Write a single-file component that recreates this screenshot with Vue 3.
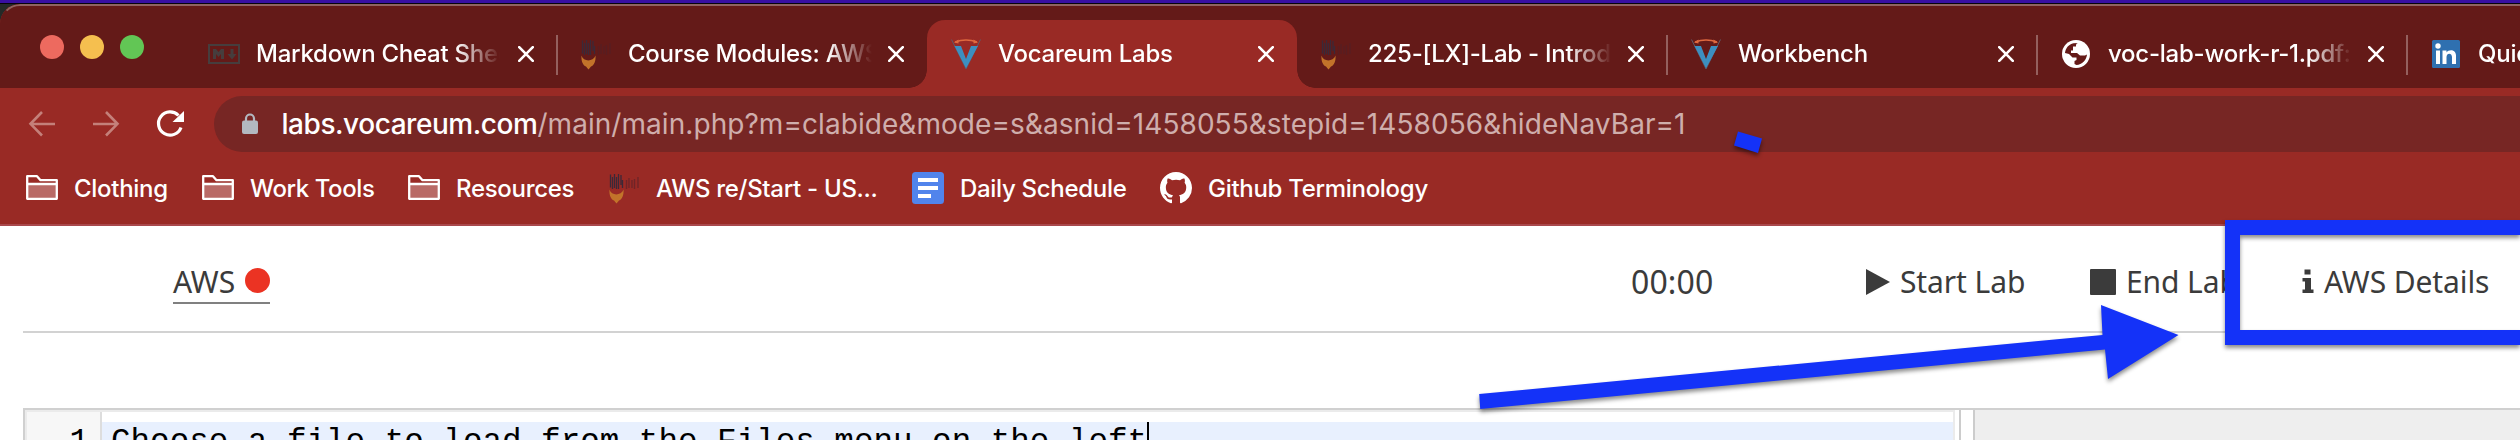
<script setup>
const tabs = [
  { title: 'Markdown Cheat Sheet', icon: 'md' },
  { title: 'Course Modules: AWS', icon: 'aws' },
  { title: 'Vocareum Labs', icon: 'voc', active: true },
  { title: '225-[LX]-Lab - Introduction', icon: 'aws' },
  { title: 'Workbench', icon: 'voc' },
  { title: 'voc-lab-work-r-1.pdf: 225', icon: 'globe' },
  { title: 'Quick', icon: 'in' },
]
const bookmarks = [
  { title: 'Clothing', icon: 'folder' },
  { title: 'Work Tools', icon: 'folder' },
  { title: 'Resources', icon: 'folder' },
  { title: 'AWS re/Start - US...', icon: 'aws' },
  { title: 'Daily Schedule', icon: 'doc' },
  { title: 'Github Terminology', icon: 'github' },
]
</script>

<template>
  <div class="screen">
    <div class="window">
      <header class="strip">
        <div class="lights"><i class="red"></i><i class="amber"></i><i class="green"></i></div>
        <div v-for="t in tabs" :key="t.title" class="tab" :class="{ active: t.active }">
          <svg v-if="t.icon === 'md'" class="ico" viewBox="0 0 32 32"><rect x="1" y="7" width="30" height="18" fill="none" stroke="#463d3d" stroke-width="2" /><path d="M5 21V11h3l2.500 3 2.500-3h3v10h-3v-5l-2.500 3-2.500-3v5zM22.500 11h3v5h3l-4.500 5.500-4.500-5.500h3z" fill="#463d3d" /></svg>
          <svg v-else-if="t.icon === 'aws'" class="ico" viewBox="0 0 32 32"><use href="#aws" /></svg>
          <svg v-else-if="t.icon === 'voc'" class="ico" viewBox="0 0 32 32"><path d="M1.500 1.500 16 31 30.500 1.500" fill="none" stroke="#5f5a68" stroke-width="1" /><path d="M4.500 8H11l5 13 5-13h7L16 30.500z" fill="#3d8fc0" /><path d="M5 4Q16 .2 27 4" fill="none" stroke="#e0693f" stroke-width="1.500" /><path d="M4 4.500 8.500 1.500V5.500zM28 4.500 23.500 1.500V5.500z" fill="#e0693f" /></svg>
          <svg v-else-if="t.icon === 'globe'" class="ico" viewBox="0 0 32 32"><circle cx="16" cy="16" r="14" fill="#fff" /><path d="M5 15C5.500 10 9 6.200 13.500 5.300L18 5c-2 .5-2 1.500-2 3.500h-3v4h-2v2.500h6l3 2.500h5l2-1C26.500 22 22 26.800 16.500 27l-2-1v-3l2-1v-2.500h-4l-3.500-3.500z" fill="#641a18" /></svg>
          <svg v-else class="ico" viewBox="0 0 32 32"><rect x="2" y="2" width="28" height="28" rx="1.500" fill="#2f70b0" /><circle cx="8" cy="8" r="2.700" fill="#fff" /><path d="M6 12.500h4V26H6zM12.500 12.500h4v2c2-3.500 9.500-3.500 9.500 3V26h-4v-7c0-4.500-5.500-4.500-5.500 0v7h-4z" fill="#fff" /></svg>
          <span class="title">{{ t.title }}</span>
          <svg class="close" viewBox="0 0 16 16"><path d="M1.200 1.200 14.800 14.800M14.800 1.200 1.200 14.800" stroke="#fff" stroke-width="2.600" stroke-linecap="round" /></svg>
        </div>
      </header>

      <div class="toolbar">
        <svg class="nav" viewBox="0 0 32 32"><path d="M29 16H5M16 4 4.500 15.800 16 27.500" fill="none" stroke="#c4807a" stroke-width="2.600" /></svg>
        <svg class="nav" viewBox="0 0 32 32"><path d="M3 16h24M16 4 27.500 15.800 16 27.500" fill="none" stroke="#c4807a" stroke-width="2.600" /></svg>
        <svg class="nav" viewBox="0 0 32 32"><path d="M27 19.500A11.600 11.600 0 1 1 24.500 7.500" fill="none" stroke="#fff" stroke-width="3.200" /><path d="M30 3V14H18.500z" fill="#fff" /></svg>
        <div class="omnibox">
          <svg class="lock" viewBox="0 0 16 22"><path d="M4 9V5.500a4 4 0 0 1 8 0V9" fill="none" stroke="#b3b8c0" stroke-width="2.200" /><rect y="7.500" width="16" height="13.500" rx="2" fill="#b3b8c0" /></svg>
          <span class="url"><b>labs.vocareum.com</b>/main/main.php?m=clabide&amp;mode=s&amp;asnid=1458055&amp;stepid=1458056&amp;hideNavBar=1</span>
        </div>
      </div>

      <nav class="bookmarks">
        <div v-for="b in bookmarks" :key="b.title" class="bookmark">
          <svg v-if="b.icon === 'folder'" class="ico" viewBox="0 0 32 32"><path d="M1.200 11h29.600v15.800H1.200z" fill="#b96a66" /><path d="M1.200 26.800V4.200H11l3.500 4H30.800V26.800zM1.200 12h29.600" fill="none" stroke="#fff" stroke-width="2.300" stroke-linejoin="round" /></svg>
          <svg v-else-if="b.icon === 'aws'" class="ico" viewBox="0 0 32 32"><use href="#aws" /></svg>
          <svg v-else-if="b.icon === 'doc'" class="ico" viewBox="0 0 32 32"><rect width="32" height="32" rx="3.500" fill="#5184ec" /><path d="M6 6h20v4H6zM6 14h20v4H6zM6 22h13v4H6z" fill="#fff" /></svg>
          <svg v-else class="ico" viewBox="0 0 16 16"><path fill="#fff" d="M8 0C3.580 0 0 3.580 0 8c0 3.540 2.290 6.530 5.470 7.590.4.070.55-.17.55-.38 0-.19-.01-.82-.01-1.490-2.010.37-2.530-.49-2.690-.94-.09-.23-.48-.94-.82-1.130-.28-.15-.68-.52-.01-.53.63-.01 1.080.58 1.230.82.72 1.210 1.870.87 2.330.66.070-.52.28-.87.51-1.070-1.780-.2-3.640-.89-3.640-3.950 0-.87.31-1.590.82-2.150-.08-.2-.36-1.020.08-2.120 0 0 .67-.21 2.200.82.64-.18 1.320-.27 2-.27s1.360.09 2 .27c1.530-1.040 2.200-.82 2.200-.82.44 1.100.16 1.920.08 2.120.51.56.82 1.270.82 2.150 0 3.070-1.870 3.750-3.650 3.950.29.25.54.73.54 1.480 0 1.070-.01 1.930-.01 2.200 0 .21.15.46.55.38A8.010 8.010 0 0 0 16 8c0-4.420-3.580-8-8-8z" /></svg>
          <span>{{ b.title }}</span>
        </div>
      </nav>
    </div>

    <main class="page">
      <div class="labbar">
        <div class="aws"><span>AWS</span><i></i></div>
        <div class="clock">00:00</div>
        <div class="action start"><svg width="24" height="26" viewBox="0 0 24 26"><path d="M0 0 24 13 0 26z" fill="#3b3b3b" /></svg><span>Start Lab</span></div>
        <div class="action end"><svg width="26" height="26" viewBox="0 0 26 26"><rect width="26" height="26" rx="1" fill="#3b3b3b" /></svg><span>End Lab</span></div>
        <div class="action details"><svg width="12" height="26" viewBox="0 0 12 26"><path d="M2.500.5h6v5h-6zM.5 9h8.500v11.500H11.500V24H.5v-3.500H3v-8H.5z" fill="#3b3b3b" /></svg><span>AWS Details</span></div>
      </div>
      <div class="workspace">
        <section class="editor">
          <div class="gutter">1</div>
          <div class="code"><span>Choose a file to load from the Files menu on the left</span><i class="caret"></i></div>
        </section>
        <div class="splitter"></div>
        <aside class="side"></aside>
      </div>
    </main>

    <svg class="marks" width="2520" height="440" viewBox="0 0 2520 440">
      <path d="M1738 131.500 1762 138.500 1758 153 1734 145.500z" />
      <path d="M1479.200 394 2102.500 335 2101 305 2178.500 335 2108 379 2105 349.500 1480.200 409z" />
      <path d="M2225 220H2560V345H2225zM2240 235V330H2560V235z" fill-rule="evenodd" />
    </svg>
    <svg width="0" height="0" class="defs">
      <defs>
        <g id="aws">
          <path d="M2.500 2.500v13M4.500 5v12M6.500 2v14M8.500 5v12M10.500 2v15M13 3v10M14.500 8v8" stroke="#3b2938" stroke-width="1.300" />
          <path d="M18.500 8v9M21 6v10M24 8v8M26.500 7v10M30 5v11" stroke="#4d2029" stroke-width="1.400" opacity=".55" />
          <path d="M1.500 17.500C3.500 24 13 24 15.500 17.500C16 23 14 27.500 11 28.500L8.500 31.500 6 28.500C3 27.500 1 23 1.500 17.500z" fill="#c2732a" />
        </g>
      </defs>
    </svg>
  </div>
</template>

<style>
html, body { margin: 0; overflow: hidden; }
</style>

<style scoped>
* { box-sizing: border-box; }
i { display: block; }
.screen {
  position: relative; width: 2520px; height: 440px; overflow: hidden; background: #fff;
  border-top: 3px solid #380fa2; display: flex; flex-direction: column;
  font-family: Inter, "Liberation Sans", sans-serif;
}
.screen::before { content: ""; position: absolute; inset: 0 0 auto; height: 40px; background: linear-gradient(#06040c 1px, #242a28 1px); }
.window {
  position: relative; flex: none; height: 222px; margin-top: 1px; overflow: hidden;
  background: #992a25; border-radius: 20px 0 0 0; border-bottom: 2px solid #a9484c;
}
.window::after {
  content: ""; position: absolute; inset: 0 -30px auto 0; height: 40px; border: 2px solid #8f6361;
  border-bottom: 0; border-radius: 20px 0 0 0; border-left-color: transparent;
}
.strip { display: flex; height: 84px; background: #641a18; padding-left: 40px; }
.lights { display: flex; gap: 16px; width: 145px; padding-top: 31px; flex: none; }
.lights i { width: 24px; height: 24px; border-radius: 50%; }
.red { background: #ed6a5f; }
.amber { background: #f5bf4f; }
.green { background: #62c655; }
.tab {
  position: relative; flex: none; width: 370px; height: 68px; margin-top: 16px;
  display: flex; align-items: center; padding: 0 23px;
}
.tab:nth-child(2) { width: 372px; }
.tab:nth-child(2) .close { margin-left: 16px; }
.tab::after { content: ""; position: absolute; right: -1px; top: 15px; width: 2px; height: 40px; background: #94605e; }
.tab.active::after, .tab:nth-child(3)::after { display: none; }
.tab.active { background: #992a25; border-radius: 18px 18px 0 0; }
.tab.active::before {
  content: ""; position: absolute; left: -18px; right: -18px; bottom: 0; height: 18px;
  background:
    radial-gradient(circle at 0 0, transparent 17.5px, #992a25 18px) left / 18px 18px no-repeat,
    radial-gradient(circle at 100% 0, transparent 17.5px, #992a25 18px) right / 18px 18px no-repeat;
}
.ico { flex: none; width: 32px; height: 32px; overflow: visible; }
.title {
  flex: none; width: 246px; margin-left: 16px; overflow: hidden; white-space: nowrap;
  font-size: 24px; line-height: 32px; font-weight: 500; letter-spacing: -.25px; color: #fff;
  -webkit-mask-image: linear-gradient(90deg, #000 200px, transparent 244px);
  mask-image: linear-gradient(90deg, #000 200px, transparent 244px);
}
.close { flex: none; width: 16px; height: 16px; margin-left: 14px; }
.toolbar { display: flex; height: 64px; padding: 8px 0 0 26px; }
.nav { flex: none; width: 32px; height: 32px; margin: 12px 32px 0 0; }
.omnibox {
  flex: none; display: flex; align-items: center; width: 2400px; height: 56px; margin-left: -4px; padding-left: 28px;
  border-radius: 28px; background: #772624;
}
.lock { width: 16px; height: 22px; margin-right: 23.5px; }
.url { font-size: 28px; white-space: nowrap; letter-spacing: .06px; color: #cfaeac; }
.url b { font-weight: 500; letter-spacing: -.45px; color: #fff; }
.bookmarks {
  display: grid; grid-template-columns: 176px 206px 200px 304px 248px 300px;
  height: 72px; padding: 0 0 0 26px; align-items: center;
}
.bookmark { display: flex; align-items: center; gap: 16px; height: 32px; white-space: nowrap; color: #fff; font-size: 24px; font-weight: 500; letter-spacing: -.3px; }
.bookmark:nth-child(2) { letter-spacing: -.42px; }
.page { position: relative; flex: 1; background: #fff; padding-left: 23px; }
.labbar {
  display: flex; height: 107px; border-bottom: 2px solid #d2d2d2; color: #3b3b3b;
  font: 30px/39px "Noto Sans", sans-serif; letter-spacing: -.1px; padding: 36px 0 0 150px; white-space: nowrap;
}
.aws { display: flex; width: 97px; height: 42px; justify-content: space-between; border-bottom: 2px solid #808080; flex: none; }
.aws i { width: 25px; height: 25px; margin-top: 6px; border-radius: 50%; background: #eb3323; }
.clock { flex: none; width: 235px; margin-left: 1361px; font-size: 32px; letter-spacing: .1px; }
.action { display: flex; flex: none; }
.action svg { margin-top: 7px; margin-right: 10px; }
.start { width: 224px; }
.end { width: 212px; }
.workspace { display: flex; height: 60px; margin-top: 75px; border-top: 2px solid #d0d0d0; border-left: 2px solid #d0d0d0; }
.editor { flex: none; display: flex; width: 1930px; border: 2px solid #ebebeb; border-bottom: 0; font: 32.600px/41px "Liberation Mono", monospace; color: #000; }
.gutter { flex: none; width: 75px; padding: 10px 11px 0 0; text-align: right; background: #f7f7f7; border-right: 2px solid #ddd; }
.code { flex: 1; display: flex; margin-top: 10px; height: 40px; padding-left: 9px; background: #e8f0fe; white-space: nowrap; }
.caret { width: 2px; height: 40px; background: #000; }
.splitter { flex: none; width: 16px; border: solid #ccc; border-width: 0 2px; margin-left: 4px; }
.side { flex: 1; background: #eee; }
.marks { position: absolute; left: 0; top: 0; margin-top: -3px; fill: #1432f8; filter: drop-shadow(0 3px 2px rgba(0, 0, 0, .45)); }
.defs { position: absolute; }
</style>
